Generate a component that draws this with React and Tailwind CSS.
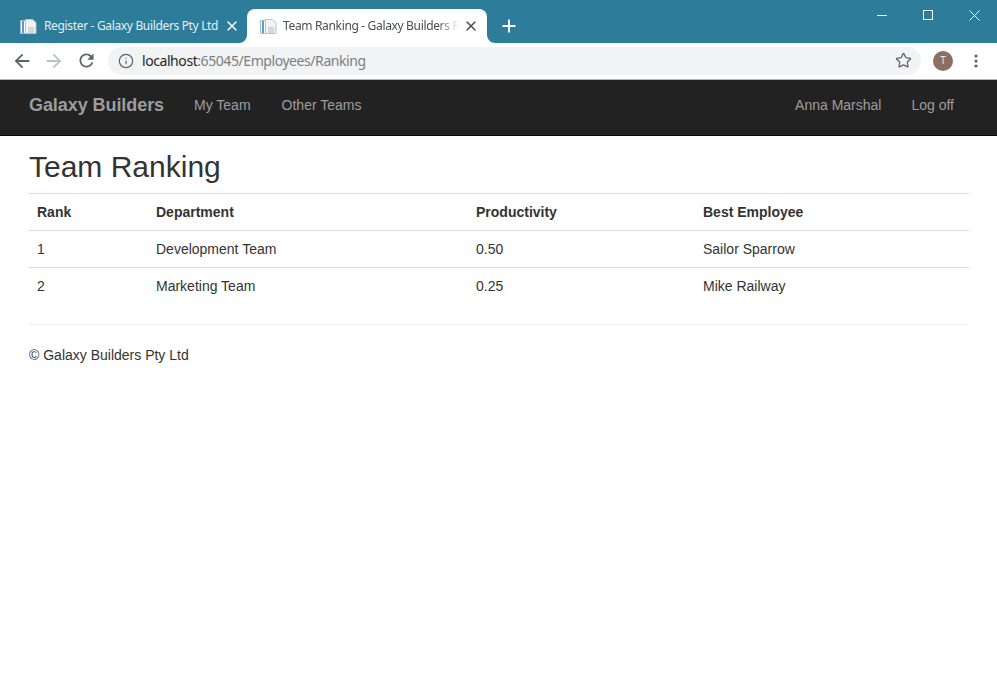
import React from 'react'
import { Info, Star, X, Plus } from 'lucide-react'

const rows = [
  { rank: 1, department: 'Development Team', productivity: '0.50', best: 'Sailor Sparrow' },
  { rank: 2, department: 'Marketing Team', productivity: '0.25', best: 'Mike Railway' },
]

function Favicon() {
  return (
    <svg width="17" height="17" viewBox="0 0 17 17" className="shrink-0">
      <path d="M.5 2.5h5v13h-5z" fill="#ffffff" stroke="#9fbdd3" strokeWidth="1" />
      <path d="M2 3h2v12H2z" fill="#5b9bd0" />
      <path d="M5.5 1.5h7l3.5 3v11H5.5z" fill="#f0f2f4" stroke="#bcc3c9" strokeWidth="1" />
      <path d="M8 10h6M8 12h6M8 14h6" stroke="#b7bec4" strokeWidth="1" />
    </svg>
  )
}

function Flare({ side }) {
  return (
    <svg width="8" height="8" viewBox="0 0 8 8" className={side === 'left' ? 'absolute bottom-0 left-[-8px]' : 'absolute bottom-0 right-[-8px]'}>
      <path d={side === 'left' ? 'M8 0v8H0a8 8 0 0 0 8-8z' : 'M0 0v8h8a8 8 0 0 1-8-8z'} fill="#ffffff" />
    </svg>
  )
}

function BackArrow({ className }) {
  return (
    <svg width="22" height="22" viewBox="0 0 24 24" fill="currentColor" className={className}>
      <path d="M20 11H7.83l5.59-5.59L12 4l-8 8 8 8 1.41-1.41L7.83 13H20v-2z" />
    </svg>
  )
}

function Reload({ className }) {
  return (
    <svg width="21" height="21" viewBox="0 0 24 24" fill="currentColor" className={className}>
      <path d="M17.65 6.35C16.2 4.9 14.21 4 12 4c-4.42 0-7.99 3.58-7.99 8s3.57 8 7.99 8c3.73 0 6.84-2.55 7.73-6h-2.08c-.82 2.33-3.04 4-5.65 4-3.31 0-6-2.69-6-6s2.69-6 6-6c1.66 0 3.14.69 4.22 1.78L13 11h7V4l-2.35 2.35z" />
    </svg>
  )
}

export default function App() {
  return (
    <div className="min-h-[699px] bg-white font-['Liberation_Sans',Arial,sans-serif] text-[14px] text-[#333333]">
      <div className="h-[43px] flex bg-[#2d7d9a] font-['Noto_Sans',sans-serif] text-[12px]">
        <div className="w-[247px] pt-[9px] flex">
          <div className="w-[239px] ml-[8px] flex items-center pl-[12px] pr-[7px] text-[#e4eff3]">
            <Favicon />
            <span className="ml-[7px] flex-1 tracking-[-0.34px] whitespace-nowrap">Register - Galaxy Builders Pty Ltd</span>
            <X size={16} strokeWidth={2} className="text-white shrink-0" />
          </div>
        </div>
        <div className="relative w-[240px] mt-[9px] bg-white rounded-t-[8px] flex items-center pl-[13px] pr-[8px] text-[#494c50]">
          <Flare side="left" />
          <Favicon />
          <span className="ml-[6px] w-[176px] tracking-[-0.34px] whitespace-nowrap overflow-hidden [mask-image:linear-gradient(to_right,#000_88%,transparent_100%)]">Team Ranking - Galaxy Builders Pty Ltd</span>
          <X size={16} strokeWidth={2} className="ml-auto text-[#44474a] shrink-0" />
          <Flare side="right" />
        </div>
        <div className="ml-[12px] mt-[9px] h-[34px] flex items-center">
          <Plus size={20} strokeWidth={2.2} className="text-white" />
        </div>
        <div className="ml-auto flex items-start text-white">
          <div className="w-[46px] h-[30px] flex items-center justify-center">
            <svg width="10" height="10" viewBox="0 0 10 10" stroke="currentColor" fill="none" shapeRendering="crispEdges">
              <path d="M0 5.5h10" />
            </svg>
          </div>
          <div className="w-[46px] h-[30px] flex items-center justify-center">
            <svg width="10" height="10" viewBox="0 0 10 10" stroke="currentColor" fill="none" shapeRendering="crispEdges">
              <path d="M.5.5h9v9h-9z" />
            </svg>
          </div>
          <div className="w-[46px] h-[30px] flex items-center justify-center">
            <svg width="11" height="11" viewBox="0 0 11 11" stroke="currentColor" fill="none">
              <path d="M.5.5l10 10M10.5.5l-10 10" />
            </svg>
          </div>
        </div>
      </div>

      <div className="h-[37px] flex items-center bg-white border-b border-[#b5b5b5] pb-[1px]">
        <BackArrow className="ml-[11px] text-[#5f6368]" />
        <BackArrow className="ml-[10px] rotate-180 text-[#bdc1c6]" />
        <Reload className="ml-[11px] text-[#5f6368]" />
        <div className="ml-[11px] w-[813px] h-[28px] bg-[#f1f3f4] rounded-[14px] flex items-center pl-[10px] pr-[9px] font-['Noto_Sans',sans-serif] text-[14px]">
          <Info size={16} strokeWidth={1.8} className="text-[#5f6368] shrink-0" />
          <span className="ml-[8px] tracking-[-0.43px] text-[#24272a]">localhost<span className="text-[#7b7f83]">:65045/Employees/Ranking</span></span>
          <Star size={17} strokeWidth={1.8} className="ml-auto text-[#5f6368]" />
        </div>
        <div className="ml-[12px] w-[20px] h-[20px] rounded-full bg-[#8d6e63] flex items-center justify-center text-[#f0e4df] text-[10px] font-['Noto_Sans',sans-serif]">T</div>
        <svg width="4" height="14" viewBox="0 0 4 14" className="ml-[21px]" fill="#5f6368">
          <circle cx="2" cy="2" r="1.6" />
          <circle cx="2" cy="7" r="1.6" />
          <circle cx="2" cy="12" r="1.6" />
        </svg>
      </div>

      <nav className="h-[56px] bg-[#222222] border-b border-[#080808] flex items-center pl-[29px] pr-[43px] pb-1 text-[#9d9d9d]">
        <span className="text-[18px] font-bold tracking-[-0.07px]">Galaxy Builders</span>
        <span className="ml-[30px]">My Team</span>
        <span className="ml-[31px]">Other Teams</span>
        <span className="ml-auto">Anna Marshal</span>
        <span className="ml-[30px]">Log off</span>
      </nav>

      <main className="pl-[29px] pr-[28px]">
        <h2 className="mt-[14px] mb-[10px] text-[30px] leading-[33px] text-[#333333]">Team Ranking</h2>
        <table className="w-full table-fixed border-collapse">
          <colgroup>
            <col className="w-[119px]" />
            <col className="w-[320px]" />
            <col className="w-[227px]" />
            <col />
          </colgroup>
          <thead>
            <tr className="h-[37px] border-t border-b border-[#dddddd]">
              <th className="px-2 text-left font-bold">Rank</th>
              <th className="px-2 text-left font-bold">Department</th>
              <th className="px-2 text-left font-bold">Productivity</th>
              <th className="px-2 text-left font-bold">Best Employee</th>
            </tr>
          </thead>
          <tbody>
            {rows.map((row, i) => (
              <tr key={row.rank} className={i === 0 ? 'h-[37px] border-b border-[#dddddd]' : 'h-[37px]'}>
                <td className="px-2">{row.rank}</td>
                <td className="px-2">{row.department}</td>
                <td className="px-2">{row.productivity}</td>
                <td className="px-2">{row.best}</td>
              </tr>
            ))}
          </tbody>
        </table>
        <hr className="mt-[19px] border-0 border-t border-[#eeeeee]" />
        <footer className="mt-[20px] leading-[20px]">© Galaxy Builders Pty Ltd</footer>
      </main>
    </div>
  )
}
